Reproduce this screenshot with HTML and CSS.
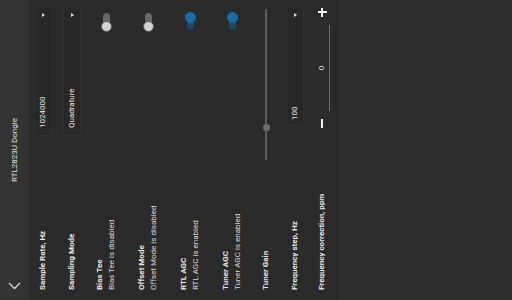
FILE: index.html
```html
<!DOCTYPE html>
<html>
<head>
<meta charset="utf-8">
<link rel="stylesheet" href="styles.css">
</head>
<body>
<div class="frame">
<div class="screen">
  <header class="bar">
    <svg class="back" width="8" height="13" viewBox="0 0 8 13"><path d="M7 1 L1.5 6.5 L7 12" fill="none" stroke="#d8d8d8" stroke-width="1.3"/></svg>
    <span class="title">RTL2823U Dongle</span>
    <span></span>
  </header>
  <main class="panel">
    <div class="row r-select first">
      <span class="label">Sample Rate, Hz</span>
      <div class="select"><span class="value">1024000</span><i class="caret"></i></div>
    </div>
    <div class="row r-select second">
      <span class="label">Sampling Mode</span>
      <div class="select"><span class="value">Quadrature</span><i class="caret"></i></div>
    </div>
    <div class="row r-toggle t1">
      <div class="texts"><span class="label">Bias Tee</span><span class="sub">Bias Tee is disabled</span></div>
      <span class="switch"></span>
    </div>
    <div class="row r-toggle">
      <div class="texts"><span class="label">Offset Mode</span><span class="sub">Offset Mode is disabled</span></div>
      <span class="switch"></span>
    </div>
    <div class="row r-toggle">
      <div class="texts"><span class="label">RTL AGC</span><span class="sub">RTL AGC is enabled</span></div>
      <span class="switch on"></span>
    </div>
    <div class="row r-toggle">
      <div class="texts"><span class="label">Tuner AGC</span><span class="sub">Tuner AGC is enabled</span></div>
      <span class="switch on"></span>
    </div>
    <div class="row r-slider">
      <span class="label">Tuner Gain</span>
      <div class="slider"><span class="thumb"></span></div>
    </div>
    <div class="row r-select step">
      <span class="label">Frequency step, Hz</span>
      <div class="select narrow"><span class="value">100</span><i class="caret"></i></div>
    </div>
    <div class="row r-stepper">
      <span class="label">Frequency correction, ppm</span>
      <div class="stepper">
        <span class="minus"></span>
        <span class="field">0</span>
        <span class="plus"></span>
      </div>
    </div>
  </main>
</div>
</div>
</body>
</html>
```
FILE: styles.css
```css
html, body {
  margin: 0;
  padding: 0;
  background: #2d2d2d;
  overflow: hidden;
}
.frame {
  width: 512px;
  height: 300px;
  overflow: hidden;
}
.screen {
  width: 300px;
  height: 512px;
  transform-origin: 0 0;
  transform: translateY(300px) rotate(-90deg);
  font-family: Roboto, "Liberation Sans", sans-serif;
  font-size: 8px;
  color: #e8e8e8;
  display: flex;
  flex-direction: column;
}
.bar {
  height: 29px;
  background: #333333;
  border-bottom: 1px solid #2a2a2a;
  display: grid;
  grid-template-columns: 1fr auto 1fr;
  align-items: center;
  padding: 0 0 0 10px;
  flex: none;
}
.back { display: block; }
.title {
  font-size: 8px;
  color: #e0e0e0;
  padding-right: 10px;
}
.panel {
  height: 307px;
  background: #2a2a2a;
  border-bottom: 1px solid #252525;
  box-sizing: border-box;
  padding: 4px 6px 0 10px;
  display: flex;
  flex-direction: column;
  flex: none;
}
.row {
  display: flex;
  align-items: center;
  justify-content: space-between;
  flex: none;
}
.label {
  font-weight: 700;
  line-height: 12px;
  white-space: nowrap;
}
.r-select { height: 18px; }
.second { margin-top: 11px; }
.select {
  width: 130px;
  height: 18px;
  box-sizing: border-box;
  background: #272727;
  border: 1px solid #303030;
  border-radius: 2px;
  display: flex;
  align-items: center;
  justify-content: space-between;
  padding: 0 6px 0 7px;
}
.select.narrow { width: 120px; padding-left: 5px; }
.value { line-height: 12px; }
.caret {
  width: 0;
  height: 0;
  border-left: 2.5px solid transparent;
  border-right: 2.5px solid transparent;
  border-top: 3.5px solid #e0e0e0;
}
.r-toggle { height: 24px; margin-top: 18px; }
.r-toggle.t1 { margin-top: 13px; }
.texts { display: flex; flex-direction: column; }
.sub { line-height: 12px; color: #dadada; }
.switch {
  position: relative;
  width: 20px;
  height: 11px;
  margin-right: 6px;
}
.switch::before {
  content: "";
  position: absolute;
  left: 2px;
  right: 1px;
  top: 2px;
  height: 7px;
  border-radius: 4px;
  background: #676767;
}
.switch::after {
  content: "";
  position: absolute;
  left: 0;
  top: 0;
  width: 11px;
  height: 11px;
  box-sizing: border-box;
  border-radius: 50%;
  background: #d2d2d2;
  border: 1px solid #5a5a5a;
}
.switch.on::before { background: #1c4766; }
.switch.on::after {
  left: 9px;
  background: #1c6aa6;
  border-color: #1c6aa6;
}
.r-slider { height: 12px; margin-top: 16px; }
.slider {
  position: relative;
  width: 151px;
  height: 2px;
  margin-right: 3px;
  background: #5e5e5e;
}
.thumb {
  position: absolute;
  left: 29px;
  top: -2.5px;
  width: 7px;
  height: 7px;
  border-radius: 50%;
  background: #707070;
}
.step { margin-top: 14px; }
.r-stepper { height: 16px; margin-top: 10px; }
.stepper {
  display: flex;
  align-items: center;
  height: 16px;
  margin-right: 2px;
}
.minus {
  width: 9px;
  height: 2px;
  background: #f0f0f0;
}
.field {
  width: 86px;
  height: 16px;
  box-sizing: border-box;
  margin: 0 8px;
  border-bottom: 1px solid #6e6e6e;
  text-align: center;
  line-height: 16px;
  padding-bottom: 1px;
}
.plus {
  position: relative;
  width: 9px;
  height: 9px;
}
.plus::before, .plus::after {
  content: "";
  position: absolute;
  background: #f0f0f0;
}
.plus::before { left: 0; right: 0; top: 3.5px; height: 2px; }
.plus::after { top: 0; bottom: 0; left: 3.5px; width: 2px; }
```
